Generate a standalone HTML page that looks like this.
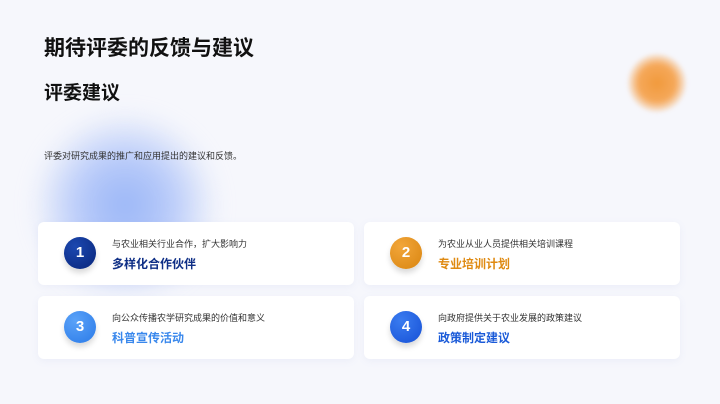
<!DOCTYPE html>
<html><head><meta charset="utf-8"><style>
*{margin:0;padding:0;box-sizing:border-box}
body{width:720px;height:404px;overflow:hidden;background:#f6f7fc;position:relative;font-family:"Liberation Sans","Noto Sans CJK SC",sans-serif}
.blob{position:absolute;border-radius:50%}
.b1{left:30px;top:110px;width:190px;height:190px;background:radial-gradient(circle,#9ab6f8 0%,#b9cbf9 35%,rgba(225,232,252,0) 70%);filter:blur(10px)}
.b2{left:628px;top:54px;width:58px;height:58px;background:radial-gradient(circle,#f19a3c 0%,#f5a85a 45%,rgba(250,200,150,0) 75%);filter:blur(2px)}
h1{position:absolute;left:44px;top:32px;font-size:21px;font-weight:bold;color:#111}
h2{position:absolute;left:44px;top:78px;font-size:19px;font-weight:bold;color:#111}
.desc{position:absolute;left:44px;top:149px;font-size:9px;color:#333}
.card{position:absolute;width:316px;height:63px;background:#fff;border-radius:6px;box-shadow:0 2px 8px rgba(120,130,200,.08)}
.c{position:absolute;left:26px;top:15px;width:32px;height:32px;border-radius:50%;color:#fff;font-weight:bold;font-size:15px;text-align:center;line-height:32px;box-shadow:0 4px 6px rgba(0,0,0,.15)}
.s{position:absolute;left:74px;top:15px;font-size:9px;color:#333}
.t{position:absolute;left:74px;top:33px;font-size:12px;font-weight:bold}
</style></head><body>
<div class="blob b1"></div><div class="blob b2"></div>
<h1>期待评委的反馈与建议</h1>
<h2>评委建议</h2>
<div class="desc">评委对研究成果的推广和应用提出的建议和反馈。</div>
<div class="card" style="left:38px;top:222px"><div class="c" style="background:radial-gradient(circle at 35% 30%,#1c48b0,#08257a)">1</div><div class="s">与农业相关行业合作，扩大影响力</div><div class="t" style="color:#0f2f86">多样化合作伙伴</div></div>
<div class="card" style="left:364px;top:222px"><div class="c" style="background:radial-gradient(circle at 35% 30%,#f2a63a,#d98510)">2</div><div class="s">为农业从业人员提供相关培训课程</div><div class="t" style="color:#df8a12">专业培训计划</div></div>
<div class="card" style="left:38px;top:296px"><div class="c" style="background:radial-gradient(circle at 35% 30%,#5aa2f8,#2a7ae8)">3</div><div class="s">向公众传播农学研究成果的价值和意义</div><div class="t" style="color:#3a88ec">科普宣传活动</div></div>
<div class="card" style="left:364px;top:296px"><div class="c" style="background:radial-gradient(circle at 35% 30%,#3a7cf0,#1650d6)">4</div><div class="s">向政府提供关于农业发展的政策建议</div><div class="t" style="color:#1a5ad8">政策制定建议</div></div>
</body></html>
